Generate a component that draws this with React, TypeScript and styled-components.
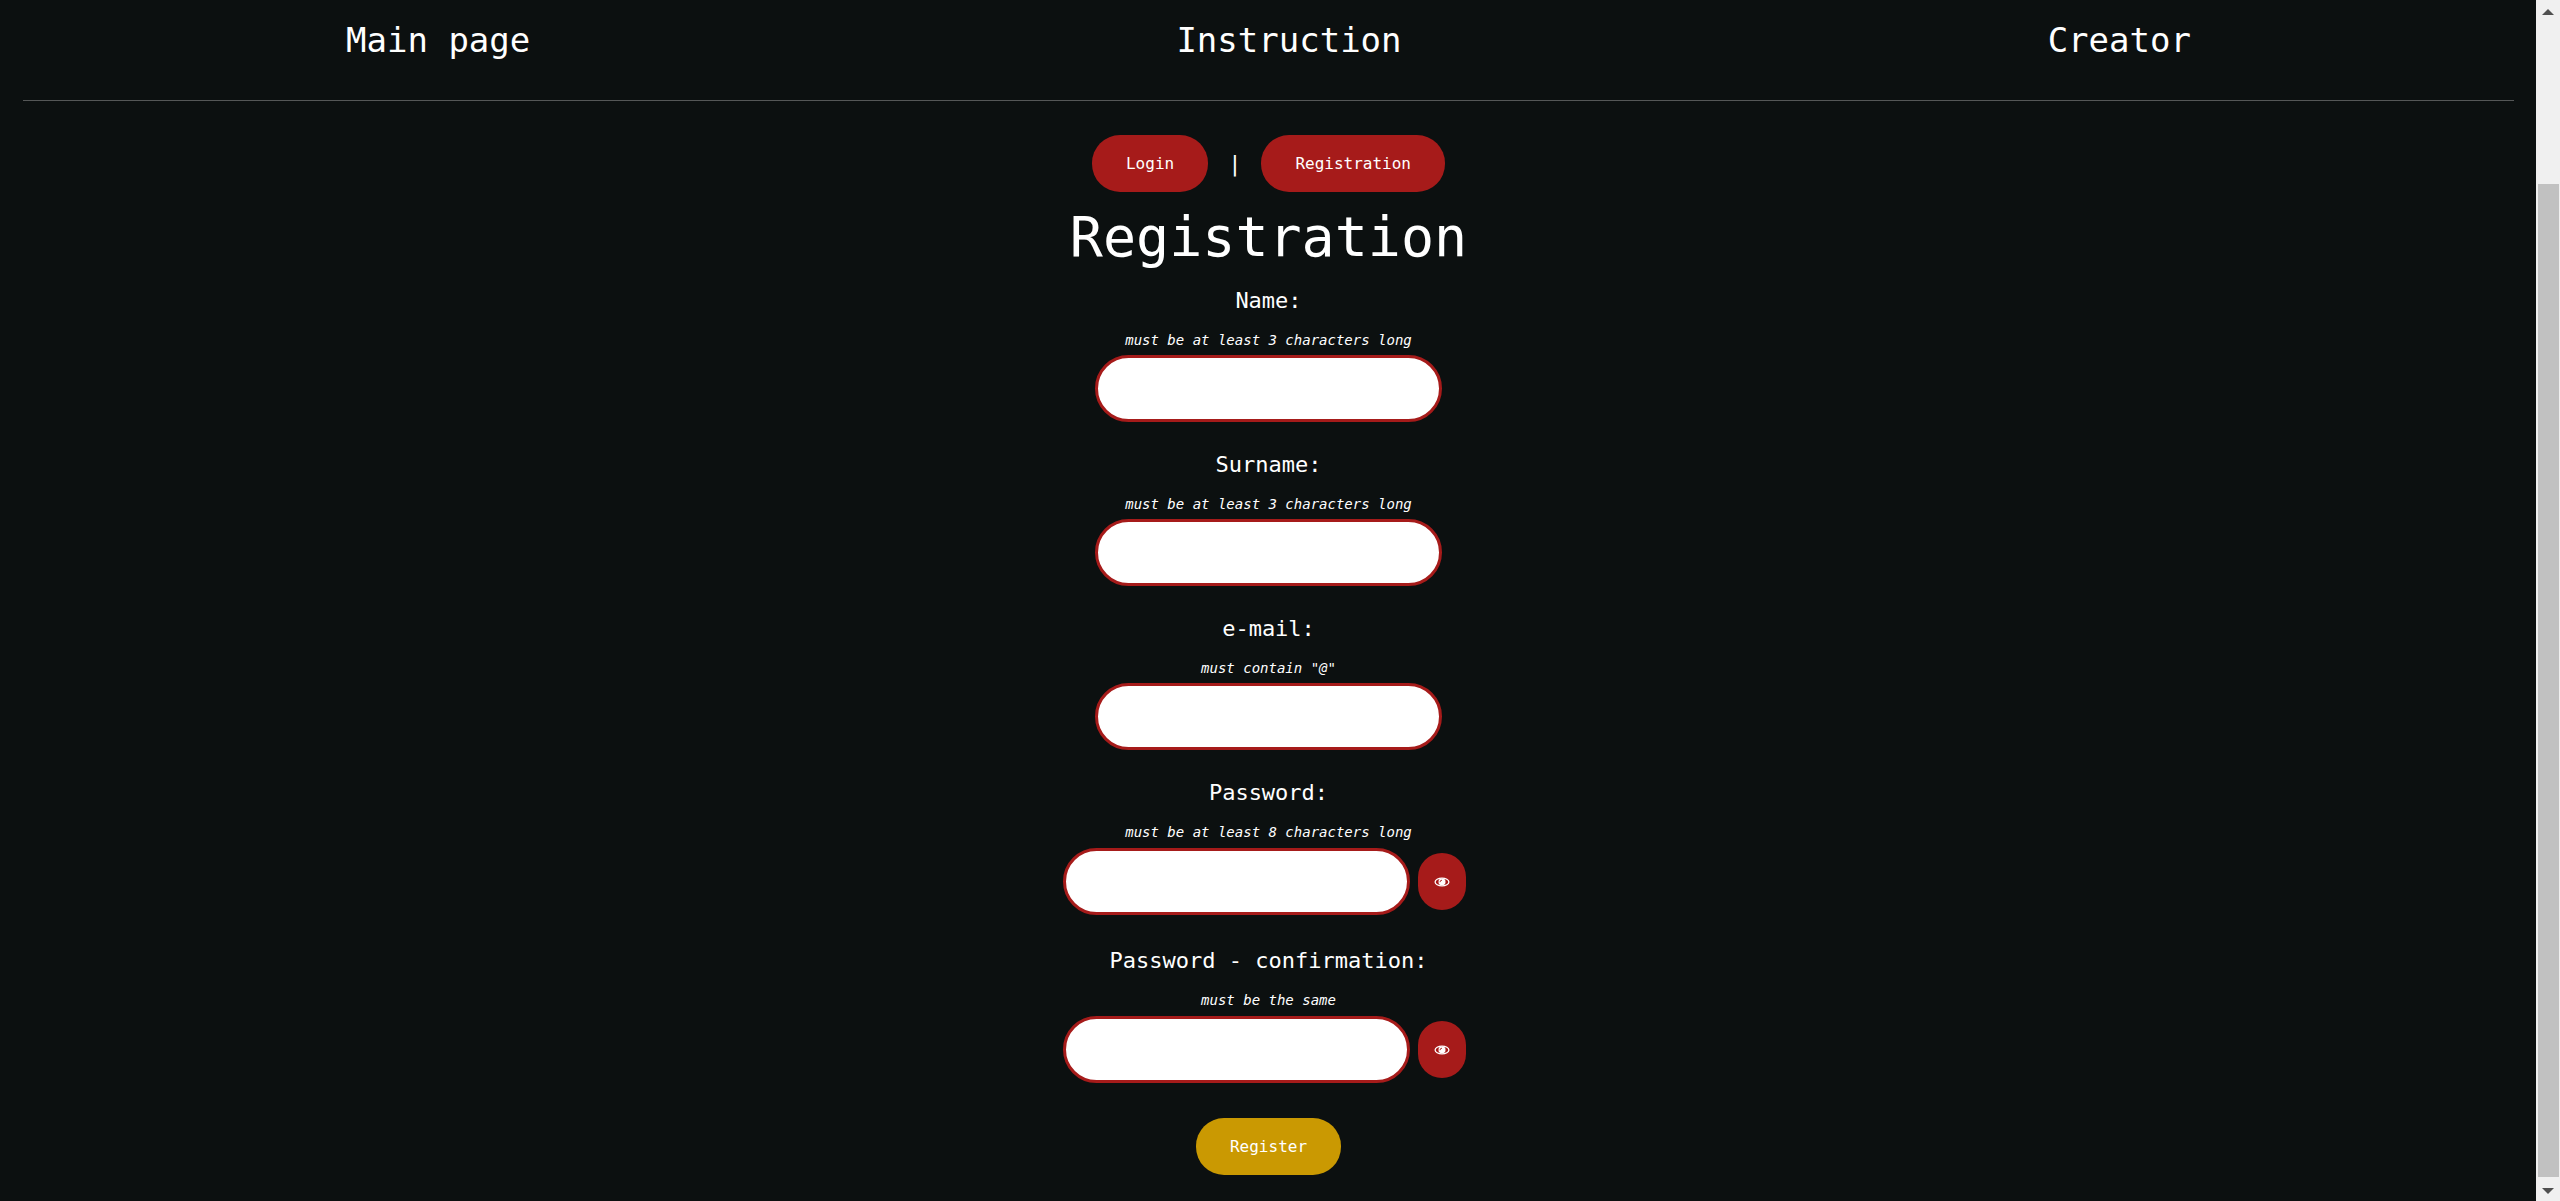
import React, { useState } from "react";
import styled, { createGlobalStyle } from "styled-components";

const GlobalStyle = createGlobalStyle`
  *, *::before, *::after { box-sizing: border-box; }
  html { scrollbar-width: none; }
  body {
    margin: 0;
    background: #0c1010;
    color: #fff;
    font-family: Consolas, "DejaVu Sans Mono", monospace;
  }
`;

const Shell = styled.div`
  display: grid;
  grid-template-columns: minmax(0, 1fr) 24px;
  min-height: 100vh;
`;

const Page = styled.div`
  padding: 0 22px 0 23px;
`;

const Nav = styled.nav`
  display: flex;
  justify-content: space-around;
  padding: 20px 0 40px;
  border-bottom: 1px solid #555757;
`;

const NavLink = styled.a`
  color: #fff;
  font-size: 34px;
  line-height: 40px;
  text-decoration: none;
`;

const Main = styled.main`
  display: flex;
  flex-direction: column;
  align-items: center;
  padding: 34px 0 24px;
`;

const Switcher = styled.div`
  display: flex;
  align-items: center;
  gap: 20px;
`;

const Separator = styled.span`
  font-size: 22px;
  line-height: 28px;
`;

const Button = styled.button<{ $color?: string; $compact?: boolean }>`
  display: inline-flex;
  align-items: center;
  justify-content: center;
  height: 57px;
  padding: 0 ${(p) => (p.$compact ? 16 : 34)}px;
  border: 0;
  border-radius: 28px;
  background: ${(p) => p.$color ?? "#a61b1a"};
  color: #fff;
  font-family: inherit;
  font-size: 16px;
  cursor: pointer;
`;

const Title = styled.h1`
  margin: 13px 0 8px;
  font-size: 55px;
  font-weight: 400;
  line-height: 64px;
`;

const Form = styled.form`
  display: flex;
  flex-direction: column;
  align-items: center;
  gap: 19px;
`;

const FieldBox = styled.div`
  display: flex;
  flex-direction: column;
  align-items: center;
`;

const Label = styled.label`
  font-size: 22px;
  line-height: 48px;
`;

const Hint = styled.span`
  font-size: 14px;
  font-style: italic;
  line-height: 30px;
`;

const Input = styled.input`
  width: 347px;
  height: 67px;
  padding: 0 30px;
  border: 3px solid #a61b1a;
  border-radius: 34px;
  background: #fff;
  color: #0c1010;
  font-family: inherit;
  font-size: 16px;
`;

const SecretRow = styled.div`
  display: flex;
  align-items: center;
  gap: 8px;
  padding: 1px 8px 3px 0;
`;

const Actions = styled.div`
  padding-top: 13px;
`;

const Scrollbar = styled.div`
  display: flex;
  flex-direction: column;
  align-items: center;
  height: 100vh;
  position: sticky;
  top: 0;
  padding: 9px 0 7px;
  background: #f0f0f0;
`;

const Track = styled.div`
  display: flex;
  flex: 1;
  flex-direction: column;
  justify-content: flex-end;
  align-self: stretch;
  padding: 0 1px 11px 2px;
`;

const Thumb = styled.div`
  height: 85.5%;
  background: #c1c1c1;
`;

const Arrow = styled.span<{ $down?: boolean }>`
  border: 6px solid transparent;
  border-width: ${(p) => (p.$down ? "6px 6px 0" : "0 6px 6px")};
  border-${(p) => (p.$down ? "top" : "bottom")}-color: #505050;
`;

function EyeIcon() {
  return (
    <svg width="16" height="10" viewBox="0 0 16 10" fill="none" aria-hidden="true">
      <ellipse cx="8" cy="5" rx="6.9" ry="3.9" stroke="#fff" strokeWidth="1.3" />
      <ellipse cx="8" cy="4.9" rx="3.5" ry="3.3" fill="#fff" />
      <path d="M6 5.2a2 2 0 0 1 2-2" stroke="#a61b1a" strokeWidth="0.9" />
    </svg>
  );
}

type FieldProps = {
  id: string;
  label: string;
  hint: string;
  type?: string;
};

function Field({ id, label, hint, type = "text" }: FieldProps) {
  return (
    <FieldBox>
      <Label htmlFor={id}>{label}</Label>
      <Hint id={`${id}-hint`}>{hint}</Hint>
      <Input id={id} name={id} type={type} aria-describedby={`${id}-hint`} />
    </FieldBox>
  );
}

function SecretField({ id, label, hint }: FieldProps) {
  const [visible, setVisible] = useState(false);
  return (
    <FieldBox>
      <Label htmlFor={id}>{label}</Label>
      <Hint id={`${id}-hint`}>{hint}</Hint>
      <SecretRow>
        <Input
          id={id}
          name={id}
          type={visible ? "text" : "password"}
          aria-describedby={`${id}-hint`}
        />
        <Button
          type="button"
          $compact
          aria-label="Show password"
          aria-pressed={visible}
          onClick={() => setVisible(!visible)}
        >
          <EyeIcon />
        </Button>
      </SecretRow>
    </FieldBox>
  );
}

export default function App() {
  return (
    <>
      <GlobalStyle />
      <Shell>
        <Page>
          <Nav>
            <NavLink href="#main">Main page</NavLink>
            <NavLink href="#instruction">Instruction</NavLink>
            <NavLink href="#creator">Creator</NavLink>
          </Nav>
          <Main>
            <Switcher>
              <Button type="button">Login</Button>
              <Separator>|</Separator>
              <Button type="button">Registration</Button>
            </Switcher>
            <Title>Registration</Title>
            <Form onSubmit={(e) => e.preventDefault()}>
              <Field id="name" label="Name:" hint="must be at least 3 characters long" />
              <Field id="surname" label="Surname:" hint="must be at least 3 characters long" />
              <Field id="email" label="e-mail:" hint={'must contain "@"'} type="email" />
              <SecretField id="password" label="Password:" hint="must be at least 8 characters long" />
              <SecretField id="confirmation" label="Password - confirmation:" hint="must be the same" />
              <Actions>
                <Button type="submit" $color="#ca9902">Register</Button>
              </Actions>
            </Form>
          </Main>
        </Page>
        <Scrollbar aria-hidden="true">
          <Arrow />
          <Track>
            <Thumb />
          </Track>
          <Arrow $down />
        </Scrollbar>
      </Shell>
    </>
  );
}
